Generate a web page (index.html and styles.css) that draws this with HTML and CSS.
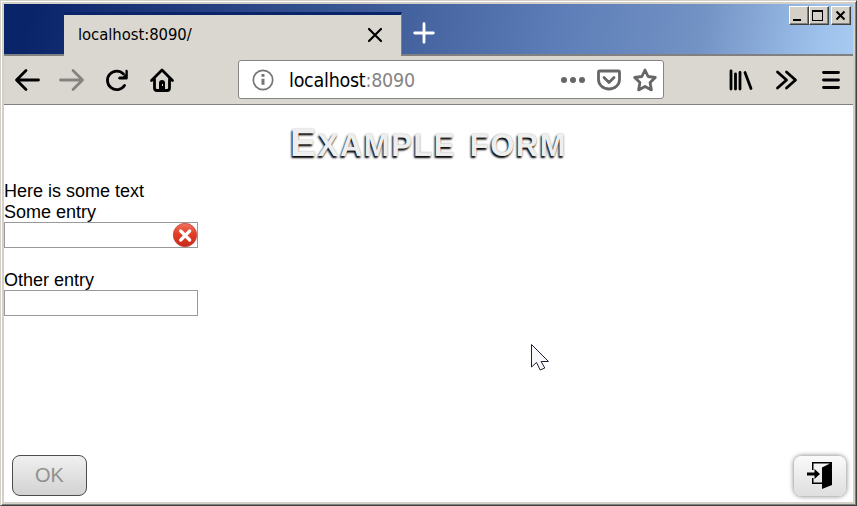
FILE: index.html
```html
<!DOCTYPE html>
<html lang="en">
<head>
<meta charset="utf-8">
<title>Example form</title>
<link rel="stylesheet" href="styles.css">
</head>
<body>
<div class="window">
  <header class="titlebar">
    <div class="tab">
      <span class="tab-title">localhost:8090/</span>
      <svg class="tab-close" width="16" height="16" viewBox="0 0 16 16"><path d="M2 2l12 12M14 2L2 14"/></svg>
    </div>
    <svg class="new-tab" width="22" height="22" viewBox="0 0 22 22"><path d="M11 1.7v18.6M1.7 11h18.6"/></svg>
    <div class="controls">
      <span class="control"><svg width="18" height="17" viewBox="0 0 18 17"><path d="M3 12h8v2H3z"/></svg></span>
      <span class="control"><svg width="18" height="17" viewBox="0 0 18 17"><path fill-rule="evenodd" d="M2 3h11v11H2zM3 5v8h9V5z"/></svg></span>
      <span class="control close"><svg width="18" height="17" viewBox="0 0 18 17"><path class="cross" d="M4.500 4.500l8 8M12.500 4.500l-8 8"/></svg></span>
    </div>
  </header>
  <nav class="toolbar">
    <div class="nav-icons">
      <svg width="26" height="26" viewBox="0 0 26 26"><path d="M24.500 13H3M12 3.500L2.500 13l9.500 9.500"/></svg>
      <svg class="disabled" width="26" height="26" viewBox="0 0 26 26"><path d="M1.500 13H23M14 3.500l9.500 9.500-9.500 9.500"/></svg>
      <svg width="26" height="26" viewBox="0 0 26 26"><path d="M20.500 18.500A9.300 9.300 0 1 1 19.500 7"/><path class="solid" d="M21.500 3q2-.8 2.300 1v7q0 1.500-1.500 1.500h-7q-1.800-.4-1-2l1.200-1h3.500l2.500-2.500z"/></svg>
      <svg width="26" height="26" viewBox="0 0 26 26"><path d="M2.500 13.500L13 3l10.500 10.500M5.500 12v9q0 2.500 2.500 2.500h10q2.500 0 2.500-2.500v-9"/><path class="solid" d="M10 23v-7q0-3 3-3t3 3v7z"/><path class="knob" d="M13 17h1v2h-1z"/></svg>
    </div>
    <div class="urlbar">
      <svg class="info" width="22" height="22" viewBox="0 0 22 22"><circle cx="11" cy="11" r="9.700"/><path d="M11 9.800v6"/><path d="M11 5v2.800"/></svg>
      <span class="url">localhost<span class="port">:8090</span></span>
      <div class="url-actions">
        <svg width="26" height="26" viewBox="0 0 26 26"><g class="dots"><circle cx="4" cy="13" r="3"/><circle cx="13" cy="13" r="3"/><circle cx="22" cy="13" r="3"/></g></svg>
        <svg width="26" height="26" viewBox="0 0 26 26"><path d="M3.500 4h19q1 0 1 1v7.500a10.500 9.500 0 0 1-21 0V5q0-1 1-1zM8 10.500l5 5 5-5"/></svg>
        <svg width="26" height="26" viewBox="0 0 26 26"><path d="M13 3l3.100 6.500 7.200 1-5.200 5.100 1.300 7.300L13 19.400l-6.400 3.500 1.300-7.300-5.200-5.100 7.200-1z"/></svg>
      </div>
    </div>
    <div class="menu-icons">
      <svg width="26" height="26" viewBox="0 0 26 26"><path d="M3 4v18M7.500 7v15M12 5.500V22M17 5.500l6 16"/></svg>
      <svg width="26" height="26" viewBox="0 0 26 26"><path d="M4.500 5l9 8-9 8M13.500 5l9 8-9 8"/></svg>
      <svg width="26" height="26" viewBox="0 0 26 26"><path d="M5.500 5.500h15M5.500 13h15M5.500 20.500h15"/></svg>
    </div>
  </nav>
  <main class="page">
    <h1>Example form</h1>
    <form>
      <p>Here is some text</p>
      <label for="some">Some entry</label>
      <div class="field">
        <input id="some" type="text">
        <svg class="error" width="26" height="26" viewBox="0 0 26 26">
          <defs><linearGradient id="red" x1="0" y1="0" x2="0" y2="1"><stop offset="0" stop-color="#ee7563"/><stop offset=".45" stop-color="#e33e27"/><stop offset="1" stop-color="#c62a18"/></linearGradient></defs>
          <circle cx="13" cy="13" r="11.700" fill="url(#red)" stroke="#c34435" stroke-width=".8"/>
          <path d="M8.700 9l9 9M17.700 9l-9 9"/>
        </svg>
      </div>
      <label class="other" for="other">Other entry</label>
      <div class="field"><input id="other" type="text"></div>
    </form>
    <footer>
      <button class="ok" type="button" disabled>OK</button>
      <button class="exit" type="button" aria-label="Exit">
        <svg width="28" height="28" viewBox="0 0 28 28"><path d="M6 9V1h20v23l-10 4v-5H6v-6h1.500v4.500H16V6.500L24 2.500H7.500V9z"/><path d="M1 11.500h7.500V8l5.500 5-5.500 5v-3.500H1z"/></svg>
      </button>
    </footer>
    <svg class="cursor" width="22" height="30" viewBox="0 0 22 30"><path d="M1.500 1.500v22.500l5-4.500 3.700 7.500 4.600-2-3.700-6.500h7.400z"/></svg>
  </main>
</div>
</body>
</html>
```

FILE: styles.css
```css
* { box-sizing: border-box; }
body { margin: 0; background: #d4d0c8; }
svg { display: block; flex: none; }

.window {
  width: 857px;
  height: 506px;
  padding: 2px;
  display: flex;
  flex-direction: column;
  border: 1px solid;
  border-color: #d4d0c8 #404040 #404040 #d4d0c8;
  box-shadow: inset 1px 1px #fff, inset -1px -1px #808080;
  background: #d4d0c8;
}
.window > * { margin: 0 0 0 1px; width: 849px; }

.window > .titlebar {
  height: 52px;
  margin-top: 1px;
  flex: none;
  display: flex;
  align-items: flex-start;
  border-bottom: 2px solid #808080;
  background: linear-gradient(100deg, #0a246a 3%, #3c5996 42%, #5c7db7 65%, #7393c5 82%, #9fc2ec 96%, #a6caf0);
}
.tab {
  width: 338px;
  height: 44px;
  margin: 8px 0 0 60px;
  padding: 0 18px 0 14px;
  display: flex;
  align-items: center;
  justify-content: space-between;
  background: #dad7d0;
  border-top: 3px solid #0a246a;
  border-right: 1px solid #808080;
}
.tab-title, .url { font-family: "DejaVu Sans Condensed", "DejaVu Sans", sans-serif; white-space: nowrap; }
.tab-title { margin-top: -3px; font-size: 16.500px; font-stretch: condensed; letter-spacing: -.05px; }
.tab-close { fill: none; stroke: #000; stroke-width: 2.2; stroke-linecap: round; margin-top: -1px; }
.new-tab { margin: 18px 0 0 11px; fill: none; stroke: #fff; stroke-width: 2.8; stroke-linecap: round; }

.controls { display: flex; margin: 2px 2px 0 auto; }
.control {
  width: 20px;
  height: 19px;
  background: #d4d0c8;
  border: 1px solid;
  border-color: #fff #404040 #404040 #fff;
  box-shadow: inset -1px -1px #808080;
}
.control.close { margin-left: 2px; }
.cross { stroke: #000; stroke-width: 2; }

.toolbar {
  height: 49px;
  flex: none;
  display: flex;
  align-items: center;
  background: #dad7d0;
  border-bottom: 1px solid #808080;
}
.toolbar svg { fill: none; stroke: #000; stroke-width: 2.8; stroke-linecap: round; stroke-linejoin: round; }
.toolbar .solid { fill: #000; stroke: none; }
.toolbar .knob { fill: #dad7d0; stroke: none; }
.toolbar .disabled { stroke: #85837f; }
.nav-icons { display: flex; gap: 19px; margin-left: 10px; }
.urlbar {
  width: 426px;
  height: 39px;
  margin: -1px 0 0 63px;
  padding: 1px 5px 0 13px;
  display: flex;
  align-items: center;
  background: #fff;
  border: 1px solid #858585;
  border-radius: 3px;
}
.urlbar .info { stroke: #757575; stroke-width: 1.7; }
.info path { stroke-width: 3; stroke-linecap: butt; }
.url { margin-left: 15px; font-size: 19.500px; font-stretch: condensed; letter-spacing: -.25px; }
.port { color: #858585; }
.url-actions { display: flex; gap: 10px; margin-left: auto; }
.urlbar .url-actions svg { stroke: #666; }
.toolbar .dots { fill: #666; stroke: none; }
.menu-icons { display: flex; gap: 19px; margin-left: 64px; }

.page {
  position: relative;
  height: 397px;
  flex: none;
  display: flex;
  flex-direction: column;
  background: #fff;
  font-family: "Liberation Sans", Arial, sans-serif;
}
h1 {
  margin: 13px 0 0;
  height: 62px;
  line-height: 46px;
  text-align: center;
  font-size: 44.500px;
  font-variant: small-caps;
  letter-spacing: 1.5px;
  color: #eee;
  text-shadow: -1px 2px 2px #000, 0 0 2px #aaa;
}
h1::first-letter { font-size: 39.500px; }
form { font-size: 18px; line-height: 21px; }
p { margin: 0; }
p, label { position: relative; top: 1px; }
label { display: block; }
.other { margin-top: 21px; }
.field { position: relative; width: 194px; height: 26px; }
input { display: block; width: 100%; height: 100%; border: 1px solid #999; background: #fff; }
.error { position: absolute; right: 0; top: 0; }
.error path { stroke: #fff; stroke-width: 3.2; stroke-linecap: round; }
footer { margin-top: auto; padding: 0 7px 6px 8px; display: flex; justify-content: space-between; }
button { padding: 0; display: flex; align-items: center; justify-content: center; font-family: inherit; background: linear-gradient(#f0f0f0, #d2d2d2); }
.ok { width: 75px; height: 41px; border: 1px solid #4c4c4c; border-radius: 8px; color: #909090; font-size: 20px; }
.exit { width: 52px; height: 40px; margin-top: 1px; padding-bottom: 2px; border: 0; border-radius: 8px; box-shadow: 0 0 4px 1px #999; background: linear-gradient(#fafafa, #dedede); }
.cursor { position: absolute; left: 526px; top: 238px; fill: #f8f8fa; stroke: #202038; stroke-width: 1; }
```
